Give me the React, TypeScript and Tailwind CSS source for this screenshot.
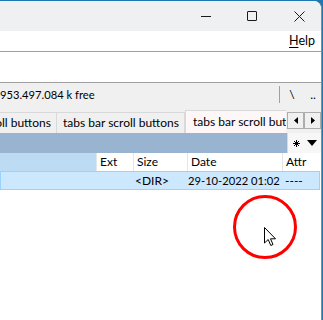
import React from 'react';

const tabCls =
    'w-[128px] h-[21px] shrink-0 flex items-center pl-[6px] border-t border-r border-[#d9d9d9] bg-[#f0f0f0] whitespace-nowrap overflow-hidden';

function CaptionButtons() {
    return (
        <div className="flex h-full">
            <div className="w-[46px] flex items-center justify-center">
                <div className="w-[10px] h-px bg-[#1a1a1a]" />
            </div>
            <div className="w-[46px] flex items-center justify-center">
                <div className="w-[10px] h-[10px] border border-[#1a1a1a] rounded-[1px]" />
            </div>
            <div className="w-[46px] flex items-center justify-center pl-[2px]">
                <svg width="11" height="11" viewBox="0 0 11 11">
                    <path d="M0.5 0.5 L10.5 10.5 M10.5 0.5 L0.5 10.5" stroke="#1a1a1a" strokeWidth="1" />
                </svg>
            </div>
        </div>
    );
}

function Arrow({ dir }: { dir: 'left' | 'right' }) {
    return (
        <div className="w-[17px] h-[17px] border border-[#adadad] bg-[#f0f0f0] flex items-center justify-center">
            <svg width="4" height="7" viewBox="0 0 4 7">
                {dir === 'left' ? <path d="M4 0 L0 3.5 L4 7 Z" fill="#000" /> : <path d="M0 0 L4 3.5 L0 7 Z" fill="#000" />}
            </svg>
        </div>
    );
}

export default function App() {
    return (
        <div className="relative w-[323px] h-[320px] overflow-hidden bg-[#1e78b4] text-[12px] text-black font-['Lato','Noto_Sans',sans-serif] leading-none">
            <div className="mt-px w-[322px] h-[319px] flex flex-col bg-white border-r border-[#8c8c8c] rounded-tr-[8px] overflow-hidden">
                {/* title bar */}
                <div className="h-[30px] shrink-0 bg-[#eff0f1] flex justify-end">
                    <CaptionButtons />
                </div>

                {/* menu */}
                <div className="h-[20px] shrink-0 flex items-center justify-end pr-[6px] text-[12.5px]">
                    <span>
                        <span className="underline underline-offset-2">H</span>elp
                    </span>
                </div>
                <div className="h-px shrink-0 bg-[#a0a0a0]" />

                {/* toolbar (empty) */}
                <div className="h-[30px] shrink-0 bg-white" />
                <div className="h-px shrink-0 bg-[#a0a0a0]" />

                {/* drive info */}
                <div className="h-[23px] shrink-0 bg-[#f0f0f0] flex items-center">
                    <div className="w-[279px] whitespace-nowrap text-[11.2px]">953.497.084 k free</div>
                    <div className="w-px h-[17px] bg-[#a0a0a0]" />
                    <div className="w-[20px] text-center ml-[2px]">\</div>
                    <div className="w-[14px] text-center ml-[4px]">..</div>
                </div>

                {/* tabs */}
                <div className="h-[27px] shrink-0 bg-[#f0f0f0] flex items-end overflow-hidden">
                    <div className="flex items-end w-[286px] overflow-hidden shrink-0">
                        <div className={`${tabCls} -ml-[71px]`}>tabs bar scroll buttons</div>
                        <div className={tabCls}>tabs bar scroll buttons</div>
                        <div className="h-[23px] shrink-0 flex items-center pl-[7px] bg-[#fdf7f7] border-t border-l border-[#d9d9d9] whitespace-nowrap">
                            tabs bar scroll buttons
                        </div>
                    </div>
                    <div className="flex self-start mt-[6px] ml-px">
                        <Arrow dir="left" />
                        <Arrow dir="right" />
                    </div>
                </div>

                {/* path bar */}
                <div className="h-[20px] shrink-0 flex bg-[#99b4d1]">
                    <div className="flex-1" />
                    <div className="w-[34px] bg-[#f7f7f7] flex items-center border-l border-[#d9d9d9]">
                        <div className="w-[17px] flex justify-center">
                            <svg width="7" height="7" viewBox="0 0 7 7">
                                <path d="M3.5 0 V7 M0 3.5 H7 M1 1 L6 6 M6 1 L1 6" stroke="#000" strokeWidth="1" />
                            </svg>
                        </div>
                        <svg width="10" height="6" viewBox="0 0 10 6" className="ml-[2px]">
                            <path d="M0 0 L10 0 L5 6 Z" fill="#000" />
                        </svg>
                    </div>
                </div>

                {/* column header */}
                <div className="h-[18px] shrink-0 flex items-center bg-white">
                    <div className="w-[96px] h-full bg-[#bddcf4]" />
                    <div className="w-[37px] h-full flex items-center pl-[3px] border-l border-[#e5e5e5]">Ext</div>
                    <div className="w-[54px] h-full flex items-center pl-[3px] border-l border-[#e5e5e5]">Size</div>
                    <div className="w-[95px] h-full flex items-center pl-[3px] border-l border-[#e5e5e5]">Date</div>
                    <div className="flex-1 h-full flex items-center pl-[3px] border-l border-[#e5e5e5]">Attr</div>
                </div>

                {/* selected row */}
                <div className="h-[19px] shrink-0 w-[320px] flex items-center bg-[#cce8ff] border border-[#99d1ff] whitespace-nowrap">
                    <div className="w-[133px]" />
                    <div className="w-[53px] pl-[1px]">&lt;DIR&gt;</div>
                    <div className="w-[96px] pl-[1px] text-[11.2px]">29-10-2022 01:02</div>
                    <div className="pl-[2px]">----</div>
                </div>

                <div className="flex-1 bg-white" />
            </div>

            {/* click highlight + cursor overlay */}
            <div className="absolute left-[233px] top-[195px] w-[64px] h-[64px] rounded-full border-[3px] border-[#ff0000]" />
            <svg className="absolute left-[264px] top-[227px]" width="13" height="20" viewBox="0 0 13 20">
                <path d="M0.5 0.5 L0.5 16 L4.2 12.5 L6.8 18.5 L9 17.5 L6.5 11.8 L11.5 11.8 Z" fill="#fff" stroke="#000" strokeWidth="1" strokeLinejoin="round" />
            </svg>
        </div>
    );
}
